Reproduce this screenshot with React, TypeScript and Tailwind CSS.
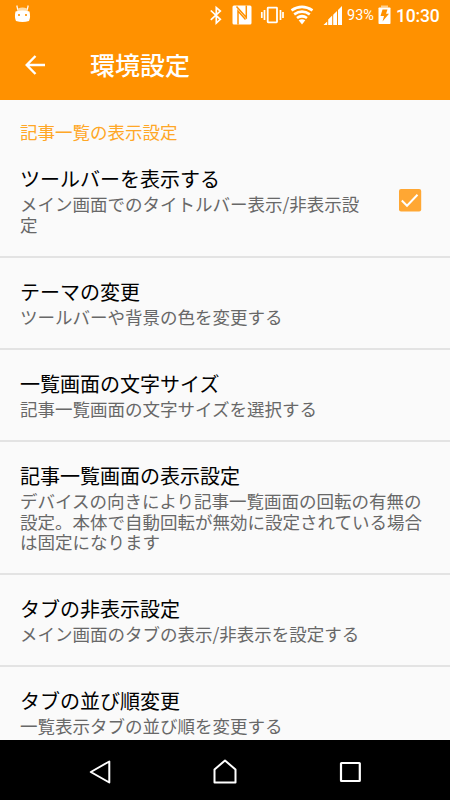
import React from "react";

type Row = { title: string; summary: string; height: string; checked?: boolean };

const rows: Row[] = [
  { title: "ツールバーを表示する", summary: "メイン画面でのタイトルバー表示/非表示設\n定", height: "h-[113px]", checked: true },
  { title: "テーマの変更", summary: "ツールバーや背景の色を変更する", height: "h-[92px]" },
  { title: "一覧画面の文字サイズ", summary: "記事一覧画面の文字サイズを選択する", height: "h-[92px]" },
  {
    title: "記事一覧画面の表示設定",
    summary: "デバイスの向きにより記事一覧画面の回転の有無の\n設定。本体で自動回転が無効に設定されている場合\nは固定になります",
    height: "h-[133px]",
  },
  { title: "タブの非表示設定", summary: "メイン画面のタブの表示/非表示を設定する", height: "h-[92px]" },
  { title: "タブの並び順変更", summary: "一覧表示タブの並び順を変更する", height: "h-[92px]" },
];

function StatusBar() {
  return (
    <div className="flex h-[30px] shrink-0 items-center text-white">
      <svg className="ml-[14px] h-[30px] w-[18px] shrink-0" viewBox="14 0 18 30" fill="none">
        <path d="M16.800 5.500L17.800 10M28.200 5.500L27.200 10" stroke="white" strokeWidth="1.200" />
        <path d="M18 8.500Q22.500 6.500 27 8.500L28 11H17Z" fill="#ffdca8" />
        <path d="M15.500 11.500Q22.500 9.500 29.500 11.500Q30.800 17 29 21Q22.500 23 16 21Q14.200 17 15.500 11.500Z" fill="white" />
        <path d="M18 14h2v2h-2zM25 14h2v2h-2z" fill="#ffa52e" />
      </svg>
      <svg className="ml-[173px] h-[30px] w-[139px] shrink-0" viewBox="205 0 139 30" fill="none">
        <path d="M210.800 10.500L220.300 19.300L216.300 23V7.500L220.300 11L210.800 19.800" stroke="white" strokeWidth="1.700" />
        <rect x="232.500" y="5.500" width="19" height="19" rx="1.500" fill="white" />
        <path d="M238 24.500V11L245.500 19.500" stroke="#ff9100" strokeWidth="1.500" />
        <path d="M246.300 5.500V17.500L236.500 6.500" stroke="#ff9100" strokeWidth="1.500" />
        <rect x="267.700" y="7.700" width="9.300" height="14.600" rx="0.500" stroke="white" strokeWidth="1.800" />
        <path d="M264.500 10V20M280.500 10V20M261.800 12V18M283 12V18" stroke="white" strokeWidth="1.700" />
        <path d="M291.500 10.300Q302 3.300 312.500 10.300M294.200 14.300Q302 9 309.800 14.300M297 18Q302 14.500 307 18" stroke="white" strokeWidth="2.700" />
        <path d="M298.700 20.300Q302 18 305.300 20.300L302 24.500Z" fill="white" />
        <path d="M323.500 25L327.200 21.500V25ZM328.200 25V19.500L332.200 15.500V25ZM333.200 25V14.800L337 11V25ZM338 25V10L342 6V25Z" fill="white" />
      </svg>
      <span className="ml-[3px] w-[28px] whitespace-nowrap pt-[2px] font-[Roboto] text-[14.500px] leading-[30px]">93%</span>
      <svg className="ml-[3px] h-[30px] w-[14px] shrink-0" viewBox="378 0 14 30">
        <path d="M381 5.500H388V7.500H381Z" fill="#ffcf8a" />
        <rect x="378.500" y="7.500" width="12" height="16.500" rx="0.800" fill="white" />
        <path d="M382.500 9.500H387.500L386 13.700H389L382.500 21.500L384 16H380.500Z" fill="#ff9100" />
      </svg>
      <span className="ml-[4px] whitespace-nowrap pt-[1px] font-[Roboto] text-[17.500px] font-medium leading-[30px] tracking-[-0.150px]">10:30</span>
    </div>
  );
}

function Preference({ row }: { row: Row }) {
  return (
    <div className={`flex shrink-0 items-stretch border-b-2 border-[#e3e3e3] pl-5 ${row.height}`}>
      <div className="flex-1 pt-[19px]">
        <div className="text-[20px] leading-[30px] text-black">{row.title}</div>
        <p className="whitespace-pre text-[17.500px] leading-[20.500px] text-[#686868]">{row.summary}</p>
      </div>
      {row.checked && (
        <div className="flex w-[52px] items-center">
          <svg className="h-[23px] w-[24px]" viewBox="0 0 24 23" fill="none">
            <rect x="1" width="22.200" height="22.500" rx="2" fill="#ffa733" />
            <path d="M3.800 11.500L9 16.700L19.500 5.800" stroke="white" strokeWidth="2" />
          </svg>
        </div>
      )}
    </div>
  );
}

export default function App() {
  return (
    <div className="flex h-[800px] w-[450px] flex-col overflow-hidden bg-[#fafafa] font-['Noto_Sans_CJK_JP',sans-serif]">
      <header className="flex h-[100px] shrink-0 flex-col bg-[#ff9100] text-white">
        <StatusBar />
        <div className="flex h-[70px] items-center">
          <svg className="ml-[25px] h-[20px] w-[20px]" viewBox="0 0 20 20" fill="none">
            <path d="M10.500 1L1.700 10L10.500 19M1.700 10H20" stroke="white" strokeWidth="2.400" />
          </svg>
          <h1 className="mb-[2px] ml-[45px] text-[25px] font-medium leading-[30px]">環境設定</h1>
        </div>
      </header>
      <main className="flex min-h-0 flex-1 flex-col overflow-hidden">
        <h2 className="h-[45px] shrink-0 pl-5 pt-[19px] text-[17.500px] leading-[25px] text-[#ffa726]">記事一覧の表示設定</h2>
        {rows.map((row) => (
          <Preference key={row.title} row={row} />
        ))}
      </main>
      <nav className="flex h-[60px] shrink-0 items-center bg-black">
        <svg className="mb-[-4px] ml-[88px] h-[26px] w-[24px]" viewBox="88 759 24 26" fill="none">
          <path d="M90.800 772L109.300 761.500V782.500Z" stroke="white" strokeWidth="2" strokeLinejoin="round" />
        </svg>
        <svg className="mb-[-2px] ml-[100px] h-[28px] w-[26px]" viewBox="212 757 26 28" fill="none">
          <path d="M214.500 782.500V769.500L225 760.500L235.500 769.500V782.500Z" stroke="white" strokeWidth="2" strokeLinejoin="round" />
        </svg>
        <svg className="mb-[-4px] ml-[101px] h-[24px] w-[24px]" viewBox="339 760 24 24" fill="none">
          <rect x="341" y="763" width="18.800" height="18" rx="0.500" stroke="white" strokeWidth="2.200" />
        </svg>
      </nav>
    </div>
  );
}
